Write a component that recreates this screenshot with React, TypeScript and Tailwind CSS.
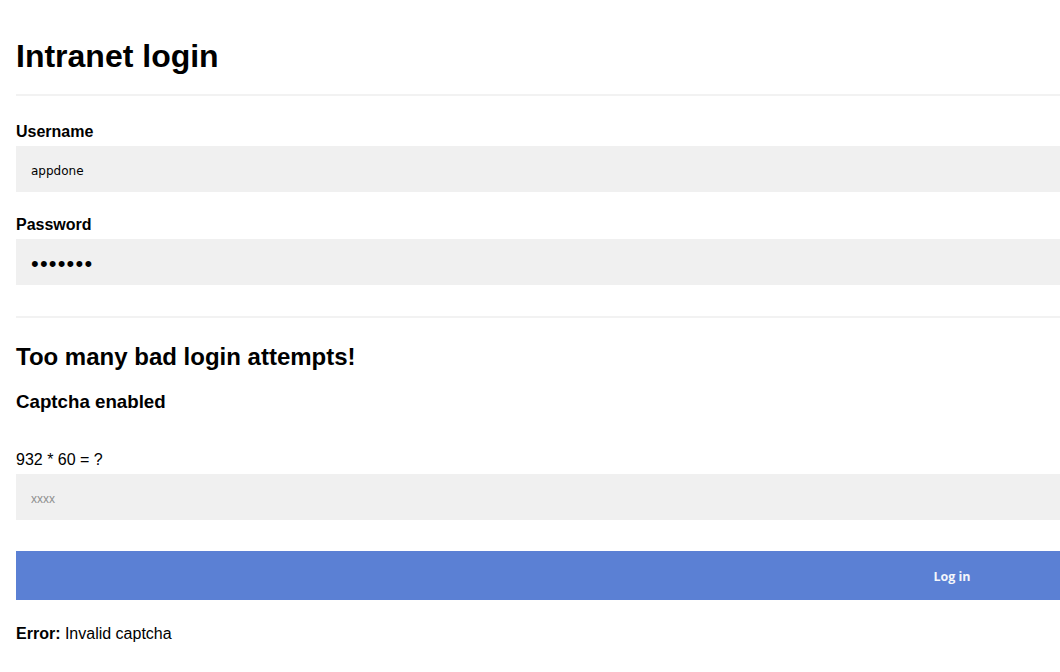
import React from "react";

export default function App() {
  const inputCls =
    "block w-full h-[46px] bg-[#f0f0f0] border-0 outline-none pl-[15px] pt-[4px] text-[12px] text-black placeholder:text-[#8f8f8f]";

  return (
    <div className="w-full overflow-hidden bg-white text-black font-['Liberation_Sans',Arial,sans-serif]">
      <div className="w-[1888px] pl-4 pt-[36px] pb-[30px]">
        <h1 className="text-[32px] leading-[40px] font-bold">Intranet login</h1>
        <div className="mt-[18px] h-[2px] bg-[#f2f2f2]" />

        <form onSubmit={(e) => e.preventDefault()}>
          <label className="block mt-[28px] text-[16px] leading-[16px] font-bold">
            Username
          </label>
          <input
            className={`${inputCls} mt-[6px] font-['DejaVu_Sans',sans-serif]`}
            defaultValue="appdone"
          />

          <label className="block mt-[25px] text-[16px] leading-[16px] font-bold">
            Password
          </label>
          <input
            type="password"
            className={`${inputCls} mt-[6px] !text-[22px] tracking-[1.2px]`}
            defaultValue="1234567"
          />

          <div className="mt-[31px] h-[2px] bg-[#f2f2f2]" />

          <h2 className="mt-[27px] text-[24px] leading-[24px] font-bold">
            Too many bad login attempts!
          </h2>
          <h3 className="mt-[24px] text-[18.72px] leading-[18px] font-bold">
            Captcha enabled
          </h3>

          <p className="mt-[41px] text-[16px] leading-[16px]">932 * 60 = ?</p>
          <input
            className={`${inputCls} mt-[6px] font-['Liberation_Sans',sans-serif]`}
            placeholder="xxxx"
          />

          <button
            type="submit"
            className="block w-full mt-[31px] h-[49px] pt-[4px] bg-[#5b80d4] text-[#f4f6fb] text-[12.5px] font-bold font-['Open_Sans',sans-serif]"
          >
            Log in
          </button>
        </form>

        <p className="mt-[26px] text-[16px] leading-[16px]">
          <span className="font-bold">Error:</span> Invalid captcha
        </p>
      </div>
    </div>
  );
}
